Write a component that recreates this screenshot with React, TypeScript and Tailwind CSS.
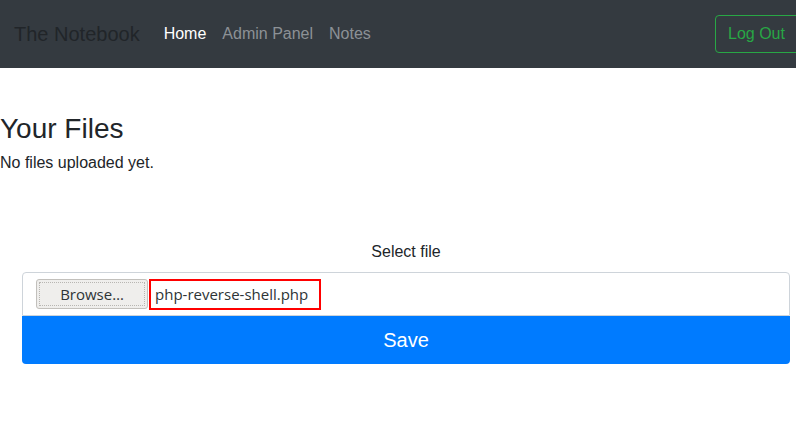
export default function App() {
  return (
    <div className="min-h-[438px] w-[796px] overflow-hidden bg-white font-['Liberation_Sans',Arial,sans-serif] text-[#212529]">
      <nav className="flex h-[68px] items-center bg-[#343a40] pl-[14px]">
        <span className="text-[20px] text-[#212529]">The Notebook</span>
        <div className="ml-[24px] flex gap-[16px] text-[16px]">
          <span className="text-white">Home</span>
          <span className="text-[#8c9196]">Admin Panel</span>
          <span className="text-[#8c9196]">Notes</span>
        </div>
        <button className="ml-auto mr-[-10px] h-[38px] w-[91px] rounded-[4px] border border-[#28a745] pl-[12px] text-left text-[16px] text-[#28a745]">
          Log Out
        </button>
      </nav>

      <main>
        <h2 className="mt-[44px] text-[28px] leading-[34px]">Your Files</h2>
        <p className="mt-[5px] text-[16px] leading-[24px]">No files uploaded yet.</p>

        <form className="mt-[65px] px-[22px] pr-[6px]">
          <label className="block text-center text-[16px] leading-[24px]">Select file</label>
          <div className="mt-[8px] flex h-[44px] items-center rounded-t-[4px] border border-[#ced4da] pl-[13px]">
            <span className="flex h-[30px] w-[112px] items-center justify-center rounded-[3px] border border-[#c2c0bc] bg-[#efeeec] p-[2px]">
              <span className="flex h-full w-full items-center justify-center border border-dotted border-[#b8b6b2] font-['Open_Sans',sans-serif] text-[15px] text-[#2e3436]">
                Browse…
              </span>
            </span>
            <span className="ml-[1px] flex h-[31px] items-center border-2 border-[#ff0000] pl-[4px] pr-[11px] font-['Open_Sans',sans-serif] text-[15px] text-[#2e3436]">
              php-reverse-shell.php
            </span>
          </div>
          <button className="h-[48px] w-full rounded-b-[4px] bg-[#007bff] text-[20px] text-white">Save</button>
        </form>
      </main>
    </div>
  );
}
